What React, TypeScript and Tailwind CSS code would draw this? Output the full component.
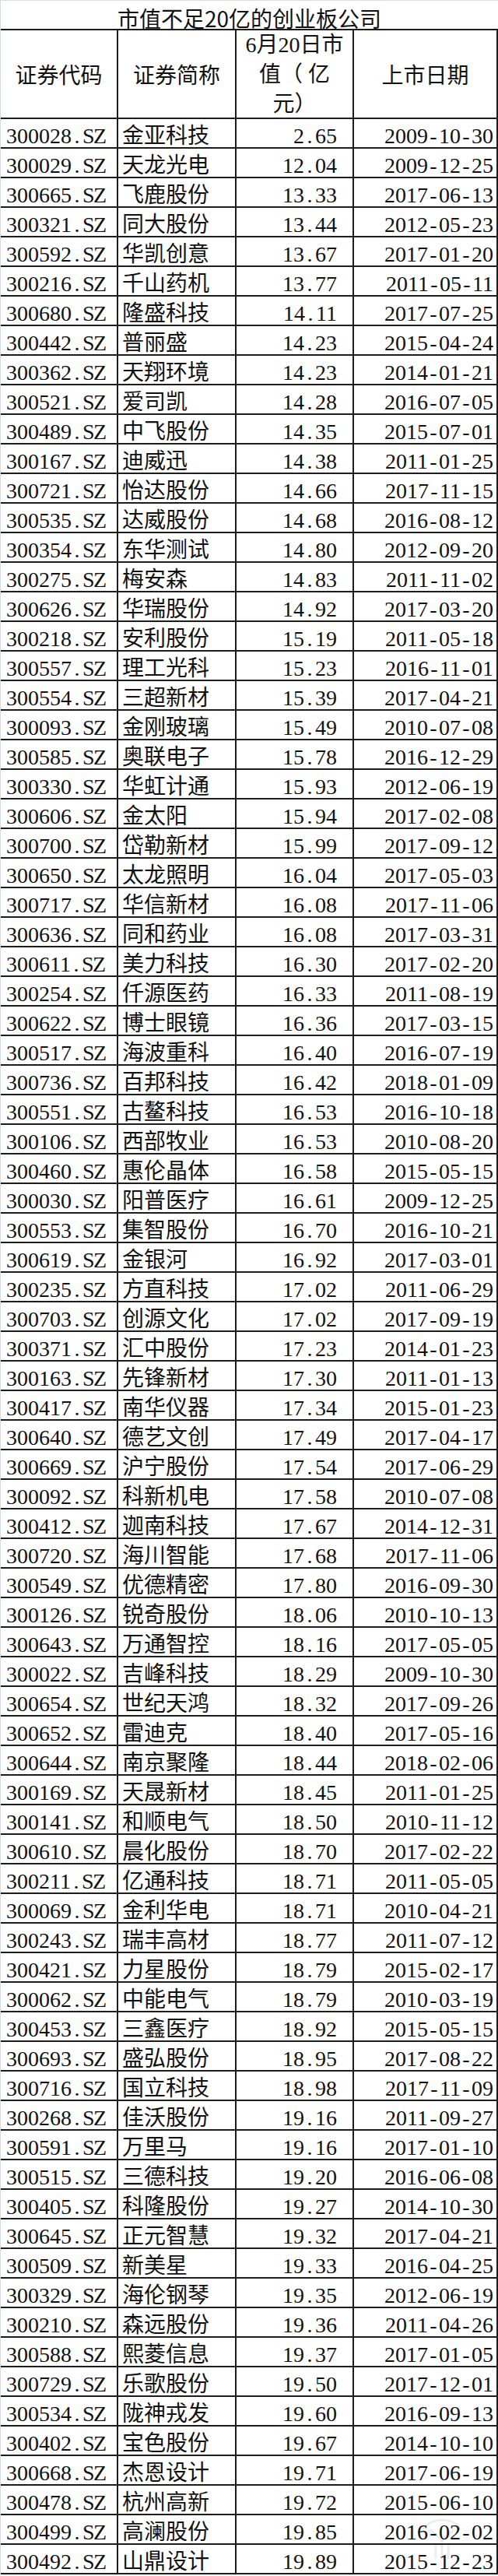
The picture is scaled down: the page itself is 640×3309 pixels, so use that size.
const rows: [string, string, string, string][] = [
  ['300028.SZ', '金亚科技', '2.65', '2009-10-30'],
  ['300029.SZ', '天龙光电', '12.04', '2009-12-25'],
  ['300665.SZ', '飞鹿股份', '13.33', '2017-06-13'],
  ['300321.SZ', '同大股份', '13.44', '2012-05-23'],
  ['300592.SZ', '华凯创意', '13.67', '2017-01-20'],
  ['300216.SZ', '千山药机', '13.77', '2011-05-11'],
  ['300680.SZ', '隆盛科技', '14.11', '2017-07-25'],
  ['300442.SZ', '普丽盛', '14.23', '2015-04-24'],
  ['300362.SZ', '天翔环境', '14.23', '2014-01-21'],
  ['300521.SZ', '爱司凯', '14.28', '2016-07-05'],
  ['300489.SZ', '中飞股份', '14.35', '2015-07-01'],
  ['300167.SZ', '迪威迅', '14.38', '2011-01-25'],
  ['300721.SZ', '怡达股份', '14.66', '2017-11-15'],
  ['300535.SZ', '达威股份', '14.68', '2016-08-12'],
  ['300354.SZ', '东华测试', '14.80', '2012-09-20'],
  ['300275.SZ', '梅安森', '14.83', '2011-11-02'],
  ['300626.SZ', '华瑞股份', '14.92', '2017-03-20'],
  ['300218.SZ', '安利股份', '15.19', '2011-05-18'],
  ['300557.SZ', '理工光科', '15.23', '2016-11-01'],
  ['300554.SZ', '三超新材', '15.39', '2017-04-21'],
  ['300093.SZ', '金刚玻璃', '15.49', '2010-07-08'],
  ['300585.SZ', '奥联电子', '15.78', '2016-12-29'],
  ['300330.SZ', '华虹计通', '15.93', '2012-06-19'],
  ['300606.SZ', '金太阳', '15.94', '2017-02-08'],
  ['300700.SZ', '岱勒新材', '15.99', '2017-09-12'],
  ['300650.SZ', '太龙照明', '16.04', '2017-05-03'],
  ['300717.SZ', '华信新材', '16.08', '2017-11-06'],
  ['300636.SZ', '同和药业', '16.08', '2017-03-31'],
  ['300611.SZ', '美力科技', '16.30', '2017-02-20'],
  ['300254.SZ', '仟源医药', '16.33', '2011-08-19'],
  ['300622.SZ', '博士眼镜', '16.36', '2017-03-15'],
  ['300517.SZ', '海波重科', '16.40', '2016-07-19'],
  ['300736.SZ', '百邦科技', '16.42', '2018-01-09'],
  ['300551.SZ', '古鳌科技', '16.53', '2016-10-18'],
  ['300106.SZ', '西部牧业', '16.53', '2010-08-20'],
  ['300460.SZ', '惠伦晶体', '16.58', '2015-05-15'],
  ['300030.SZ', '阳普医疗', '16.61', '2009-12-25'],
  ['300553.SZ', '集智股份', '16.70', '2016-10-21'],
  ['300619.SZ', '金银河', '16.92', '2017-03-01'],
  ['300235.SZ', '方直科技', '17.02', '2011-06-29'],
  ['300703.SZ', '创源文化', '17.02', '2017-09-19'],
  ['300371.SZ', '汇中股份', '17.23', '2014-01-23'],
  ['300163.SZ', '先锋新材', '17.30', '2011-01-13'],
  ['300417.SZ', '南华仪器', '17.34', '2015-01-23'],
  ['300640.SZ', '德艺文创', '17.49', '2017-04-17'],
  ['300669.SZ', '沪宁股份', '17.54', '2017-06-29'],
  ['300092.SZ', '科新机电', '17.58', '2010-07-08'],
  ['300412.SZ', '迦南科技', '17.67', '2014-12-31'],
  ['300720.SZ', '海川智能', '17.68', '2017-11-06'],
  ['300549.SZ', '优德精密', '17.80', '2016-09-30'],
  ['300126.SZ', '锐奇股份', '18.06', '2010-10-13'],
  ['300643.SZ', '万通智控', '18.16', '2017-05-05'],
  ['300022.SZ', '吉峰科技', '18.29', '2009-10-30'],
  ['300654.SZ', '世纪天鸿', '18.32', '2017-09-26'],
  ['300652.SZ', '雷迪克', '18.40', '2017-05-16'],
  ['300644.SZ', '南京聚隆', '18.44', '2018-02-06'],
  ['300169.SZ', '天晟新材', '18.45', '2011-01-25'],
  ['300141.SZ', '和顺电气', '18.50', '2010-11-12'],
  ['300610.SZ', '晨化股份', '18.70', '2017-02-22'],
  ['300211.SZ', '亿通科技', '18.71', '2011-05-05'],
  ['300069.SZ', '金利华电', '18.71', '2010-04-21'],
  ['300243.SZ', '瑞丰高材', '18.77', '2011-07-12'],
  ['300421.SZ', '力星股份', '18.79', '2015-02-17'],
  ['300062.SZ', '中能电气', '18.79', '2010-03-19'],
  ['300453.SZ', '三鑫医疗', '18.92', '2015-05-15'],
  ['300693.SZ', '盛弘股份', '18.95', '2017-08-22'],
  ['300716.SZ', '国立科技', '18.98', '2017-11-09'],
  ['300268.SZ', '佳沃股份', '19.16', '2011-09-27'],
  ['300591.SZ', '万里马', '19.16', '2017-01-10'],
  ['300515.SZ', '三德科技', '19.20', '2016-06-08'],
  ['300405.SZ', '科隆股份', '19.27', '2014-10-30'],
  ['300645.SZ', '正元智慧', '19.32', '2017-04-21'],
  ['300509.SZ', '新美星', '19.33', '2016-04-25'],
  ['300329.SZ', '海伦钢琴', '19.35', '2012-06-19'],
  ['300210.SZ', '森远股份', '19.36', '2011-04-26'],
  ['300588.SZ', '熙菱信息', '19.37', '2017-01-05'],
  ['300729.SZ', '乐歌股份', '19.50', '2017-12-01'],
  ['300534.SZ', '陇神戎发', '19.60', '2016-09-13'],
  ['300402.SZ', '宝色股份', '19.67', '2014-10-10'],
  ['300668.SZ', '杰恩设计', '19.71', '2017-06-19'],
  ['300478.SZ', '杭州高新', '19.72', '2015-06-10'],
  ['300499.SZ', '高澜股份', '19.85', '2016-02-02'],
  ['300492.SZ', '山鼎设计', '19.89', '2015-12-23'],
];

// SimSun-style half-width cells: digits are already 0.5em, everything else gets padded to it
function Mono({ text }: { text: string }) {
  return (
    <>
      {text.split('').map((ch, i) =>
        /[0-9]/.test(ch) ? ch : (
          <span key={i} className="inline-block w-[0.5em] text-center">{ch}</span>
        )
      )}
    </>
  );
}

const grid = 'grid grid-cols-[151px_152px_151px_185px]';
const cell = 'border-r-2 border-[#1c1c1c]';

export default function App() {
  return (
    <div className="relative w-[640px] bg-white text-[28px] text-[#111] font-['Liberation_Serif','Noto_Sans_CJK_SC',serif]">
      <div className="border-l border-[#d5dbe3]">
        <div className="h-[39px] border-t border-[#dcdcdc] border-b-2 border-b-[#1c1c1c] pt-[8px] leading-[28px] text-center font-['Noto_Sans_CJK_SC',sans-serif]">
          市值不足20亿的创业板公司
        </div>

        <div className={`${grid} h-[114px] border-b-2 border-[#1c1c1c] font-['Liberation_Serif','Noto_Sans_CJK_SC',sans-serif]`}>
          <div className={`${cell} flex items-center justify-center pt-[4px]`}>证券代码</div>
          <div className={`${cell} flex items-center justify-center pt-[4px]`}>证券简称</div>
          <div className={`${cell} text-center leading-[38px]`}>
            6月20日市<br />值（ 亿<br />元）
          </div>
          <div className={`${cell} flex items-center justify-center pt-[4px]`}>上市日期</div>
        </div>

        {rows.map(([code, name, value, date]) => (
          <div key={code} className={`${grid} h-[38px] border-b-2 border-[#1c1c1c] leading-[28px]`}>
            <div className={`${cell} pl-[7px] pt-[8px] whitespace-nowrap`}><Mono text={code} /></div>
            <div className={`${cell} pl-[5px] pt-[8px] whitespace-nowrap`}>{name}</div>
            <div className={`${cell} pr-[20px] pt-[8px] text-right whitespace-nowrap`}><Mono text={value} /></div>
            <div className={`${cell} pr-[4px] pt-[8px] text-right whitespace-nowrap`}><Mono text={date} /></div>
          </div>
        ))}
      </div>

      {/* faint watermark in the bottom-right corner */}
      <svg className="absolute right-[44px] bottom-[14px] pointer-events-none" width="56" height="66" viewBox="0 0 56 66">
        <g fill="none" stroke="#000" strokeOpacity="0.07" strokeWidth="3">
          <path d="M4 22 C14 6 42 6 52 22" />
          <path d="M12 22 L28 36 L44 22" />
          <path d="M28 36 V60" />
          <path d="M20 40 V60" />
          <path d="M36 40 V60" />
        </g>
      </svg>
    </div>
  );
}
